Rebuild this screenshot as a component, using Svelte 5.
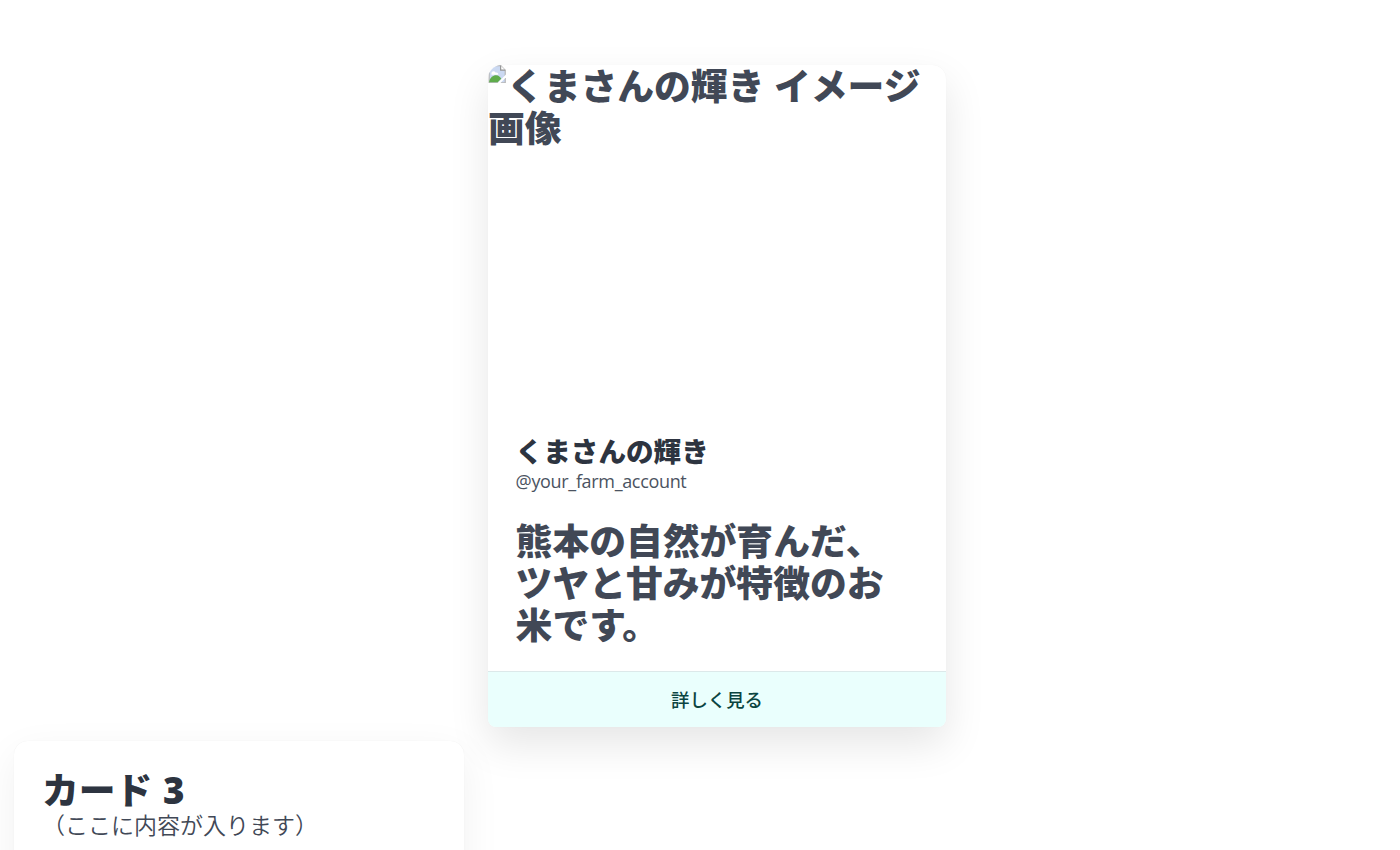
<script>
	const card = {
		name: "くまさんの輝き",
		alt: "くまさんの輝き イメージ画像",
		account: "@your_farm_account",
		description: "熊本の自然が育んだ、ツヤと甘みが特徴のお米です。",
		button: "詳しく見る"
	};
</script>

<main>
	<article class="card product">
		<div class="image">
			<svg viewBox="0 0 16 16" aria-hidden="true">
				<path d="M1 .5h10l4 4v11H1z" fill="#cbd9f2" stroke="#b4b4b4" />
				<path d="M11 .5v4h4" fill="#fff" stroke="#929292" />
				<path d="M3 7.5c0-2 2.6-2.7 3.5-1 1.8-.4 2.7.8 2.5 2H3z" fill="#fff" />
				<path d="M1 14.5c1-3.7 3.3-5.5 6-5.5 2.4 0 3.7 1.8 4.5 3L8.5 15H1z" fill="#5fac4c" />
				<path d="M8 16l8-8v2.4L10.5 16z" fill="#fff" />
			</svg>{card.alt}
		</div>
		<div class="body">
			<h2>{card.name}</h2>
			<p class="account">{card.account}</p>
			<p class="description">{card.description}</p>
		</div>
		<button type="button">{card.button}</button>
	</article>

	<article class="card plain">
		<h2>カード 3</h2>
		<p>（ここに内容が入ります）</p>
	</article>
</main>

<style>
	:global(body) {
		background: #fff;
		overflow: hidden;
	}

	main {
		display: grid;
		grid-template-columns: 450px 458px;
		column-gap: 24px;
		row-gap: 14px;
		height: 850px;
		box-sizing: border-box;
		padding: 65px 0 0 14px;
		grid-template-rows: 662px 230px;
		overflow: hidden;
		color: #414856;
		font-family: "Open Sans", "Noto Sans CJK JP", sans-serif;
	}

	h2,
	p { margin: 0; }

	.card {
		border-radius: 14px;
		background: #fff;
		box-shadow: 0 0 1px rgba(0, 0, 0, 0.08), 0 12px 40px rgba(0, 0, 0, 0.06);
	}

	.product {
		grid-column: 2;
		display: flex;
		flex-direction: column;
		overflow: hidden;
		border-radius: 14px 14px 8px 8px;
		box-shadow: 0 0 1px rgba(0, 0, 0, 0.06), 0 17px 40px rgba(0, 0, 0, 0.1);
	}

	.image {
		height: 345px;
		box-sizing: border-box;
		font-size: 36.8px;
		font-weight: 900;
		line-height: 42px;
	}

	.image svg {
		width: 18.4px;
		height: 18.4px;
		margin-right: 0.5px;
		vertical-align: top;
	}

	.body {
		flex: 1;
		padding: 23px 28px 0 27.6px;
	}

	h2 {
		color: #2d3440;
		font-weight: 800;
	}

	.product h2 {
		font-size: 27.6px;
		line-height: 36px;
	}

	.account {
		color: #4b5361;
		font-size: 18px;
		letter-spacing: -0.33px;
		line-height: 24px;
	}

	.description {
		margin-top: 27px;
		font-size: 36.8px;
		font-weight: 900;
		line-height: 42px;
	}

	button {
		height: 56px;
		border: 0;
		border-top: 1px solid #dce9ea;
		padding: 0 0 2px;
		background: #eafffd;
		color: #0b4541;
		font: 500 18.4px "Noto Sans CJK JP", sans-serif;
	}

	.plain {
		grid-column: 1;
		padding: 28px 28px 0;
	}

	.plain h2 {
		font-size: 36.8px;
		line-height: 42px;
		word-spacing: 1px;
	}

	.plain p {
		font-size: 23px;
		font-weight: 350;
		line-height: 28px;
	}
</style>
